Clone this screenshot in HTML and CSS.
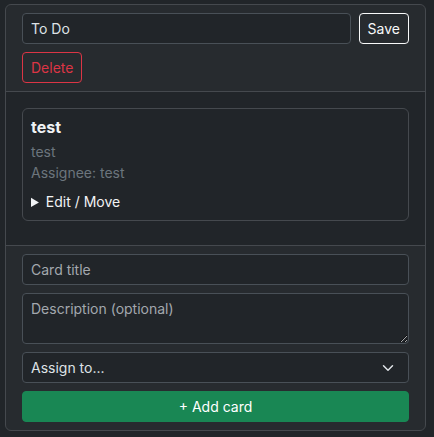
FILE: index.html
```html
<!DOCTYPE html>
<html lang="en">
<head>
<meta charset="utf-8">
<title>Column</title>
<link rel="stylesheet" href="styles.css">
</head>
<body>
<section class="column">
  <div class="column-header">
    <form class="rename-row">
      <input class="field" type="text" value="To Do">
      <button type="button" class="btn btn-light">Save</button>
    </form>
    <button type="button" class="btn btn-danger delete">Delete</button>
  </div>
  <div class="column-body">
    <article class="task">
      <h6 class="task-title">test</h6>
      <div class="task-meta">test</div>
      <div class="task-meta">Assignee: test</div>
      <details class="task-edit">
        <summary>Edit / Move</summary>
      </details>
    </article>
  </div>
  <div class="column-footer">
    <form class="add-form">
      <input class="field" type="text" placeholder="Card title">
      <textarea class="field area" placeholder="Description (optional)"></textarea>
      <div class="field select">
        <span>Assign to...</span>
        <svg class="chev" width="16" height="12" viewBox="0 0 16 16" aria-hidden="true"><path d="M2 5l6 6 6-6" fill="none" stroke="#dee2e6" stroke-width="2" stroke-linecap="round" stroke-linejoin="round"/></svg>
      </div>
      <button type="button" class="btn btn-success add">+ Add card</button>
    </form>
  </div>
</section>
</body>
</html>
```
FILE: styles.css
```css
* { box-sizing: border-box; }
html, body { margin: 0; }
body {
  background: #212529;
  color: #dee2e6;
  font-family: Inter, "Noto Sans", "Liberation Sans", sans-serif;
  font-size: 14px;
  line-height: 1.5;
  padding: 4px 8px 0 5px;
}
.column {
  border: 1px solid #45494e;
  border-radius: 6px;
  background: #212529;
  overflow: hidden;
}
.column-header {
  background: rgba(255,255,255,0.03);
  border-bottom: 1px solid #45494e;
  padding: 8px 16px;
  display: flex;
  flex-direction: column;
  align-items: flex-start;
  gap: 8px;
}
.rename-row {
  display: flex;
  gap: 8px;
  width: 100%;
  margin: 0;
}
.rename-row .field { flex: 1; }
.field {
  display: block;
  width: 100%;
  height: 31px;
  padding: 4px 8px;
  font: inherit;
  font-size: 14px;
  line-height: 21px;
  color: #dee2e6;
  background: #212529;
  border: 1px solid #495057;
  border-radius: 4px;
  outline: none;
}
.field::placeholder { color: #a3a8ae; }
.btn {
  font: inherit;
  font-size: 14px;
  line-height: 21px;
  padding: 4px 8px;
  border-radius: 4px;
  background: transparent;
  border: 1px solid;
  cursor: pointer;
}
.btn-light { color: #f8f9fa; border-color: #f8f9fa; }
.btn-danger { color: #dc3545; border-color: #dc3545; }
.btn-success {
  color: #fff;
  background: #198754;
  border-color: #198754;
}
.column-body { padding: 16px 16px 16px; }
.task {
  border: 1px solid #45494e;
  border-radius: 6px;
  padding: 8px;
  margin-bottom: 8px;
}
.task-title {
  margin: 0 0 4px;
  font-size: 16px;
  font-weight: 700;
  line-height: 20px;
  color: #f1f3f5;
}
.task-meta { color: #6c757d; }
.task-edit { margin-top: 8px; }
.task-edit summary { cursor: pointer; color: #f1f3f5; }
.column-footer {
  background: rgba(255,255,255,0.03);
  border-top: 1px solid #45494e;
  padding: 8px 16px;
}
.add-form {
  display: flex;
  flex-direction: column;
  gap: 8px;
  margin: 0;
}
.area {
  height: 51px;
  resize: vertical;
}
.select {
  display: flex;
  align-items: center;
  justify-content: space-between;
  padding-right: 12px;
}
.chev { display: block; }
.add { width: 100%; }
```
